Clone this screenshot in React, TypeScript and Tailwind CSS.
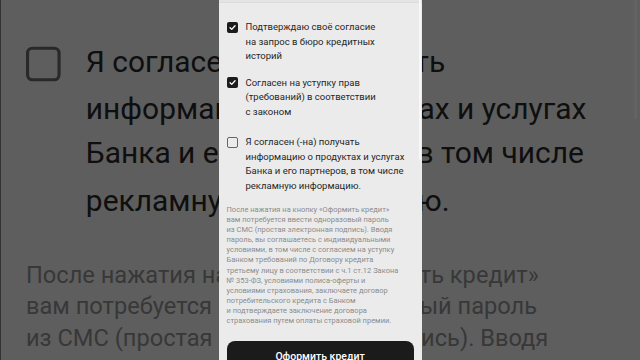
import { FC } from 'react';

type Consent = {
  checked: boolean;
  lines: string[];
  space: string;
};

const consents: Consent[] = [
  {
    checked: true,
    lines: ['Подтверждаю своё согласие', 'на запрос в бюро кредитных', 'историй'],
    space: 'mt-[17px]',
  },
  {
    checked: true,
    lines: ['Согласен на уступку прав', '(требований) в соответствии', 'с законом'],
    space: 'mt-[12px]',
  },
  {
    checked: false,
    lines: [
      'Я согласен (-на) получать',
      'информацию о продуктах и услугах',
      'Банка и его партнеров, в том числе',
      'рекламную информацию.',
    ],
    space: 'mt-[16px]',
  },
];

const notice = [
  'После нажатия на кнопку «Оформить кредит»',
  'вам потребуется ввести одноразовый пароль',
  'из СМС (простая электронная подпись). Вводя',
  'пароль, вы соглашаетесь с индивидуальными',
  'условиями, в том числе с согласием на уступку',
  'Банком требований по Договору кредита',
  'третьему лицу в соответствии с ч.1 ст.12 Закона',
  '№ 353-ФЗ, условиями полиса-оферты и',
  'условиями страхования, заключаете договор',
  'потребительского кредита с Банком',
  'и подтверждаете заключение договора',
  'страхования путем оплаты страховой премии.',
];

const Box: FC<{ checked: boolean }> = ({ checked }) =>
  checked ? (
    <span className="flex h-[11px] w-[11px] items-center justify-center rounded-[2px] bg-[#1c1c1c]">
      <svg width="9" height="9" viewBox="0 0 12 12" fill="none">
        <path d="M2.8 6.3l2.2 2.2 4.4-4.8" stroke="#fff" strokeWidth="1.8" strokeLinecap="round" strokeLinejoin="round" />
      </svg>
    </span>
  ) : (
    <span className="h-[11px] w-[11px] rounded-[2px] border-[1.5px] border-[#666]" />
  );

// one screen of the consent sheet, drawn twice: small in the middle, blown up behind
const Sheet: FC = () => (
  <div className="relative h-[360px] w-[203px] shrink-0 overflow-hidden bg-[#ebebeb] font-['Roboto','Noto_Sans',sans-serif]">
    <div className="h-[3px] border-b border-[#dcdcdc] bg-[#e4e4e4]" />
    <div className="pl-[8px] pr-[8px]">
      {consents.map((c, i) => (
        <div key={i} className={`${c.space} flex gap-[8px]`}>
          <div className="flex h-[14px] items-center">
            <Box checked={c.checked} />
          </div>
          <div className="text-[9.5px] leading-[14.5px] text-[#262626]">
            {c.lines.map(l => (
              <div key={l} className="whitespace-nowrap">{l}</div>
            ))}
          </div>
        </div>
      ))}

      <div className="mt-[12px] text-[7.5px] leading-[10.1px] text-[#8c8c8c]">
        {notice.map(l => (
          <div key={l} className="whitespace-nowrap">{l}</div>
        ))}
      </div>

      <button className="mt-[15px] flex h-[40px] w-full justify-center rounded-[8px] bg-[#1b1b1b] pt-[9px] text-[10.5px] font-medium leading-[14px] text-white">
        Оформить кредит
      </button>
    </div>
    <div className="absolute right-[1px] top-0 h-[160px] w-[1.5px] rounded-b-full bg-[#f8f8f8]" />
  </div>
);

const App: FC = () => {
  return (
    <div className="relative flex h-[360px] w-[640px] justify-center overflow-hidden bg-[#5e5e5e]">
      <div aria-hidden className="absolute inset-0 flex justify-center">
        <div className="origin-[50%_179px] scale-[3.15]">
          <Sheet />
        </div>
        <div className="absolute inset-0 bg-black/60" />
      </div>
      <div className="relative">
        <Sheet />
      </div>
    </div>
  );
};

export default App;
